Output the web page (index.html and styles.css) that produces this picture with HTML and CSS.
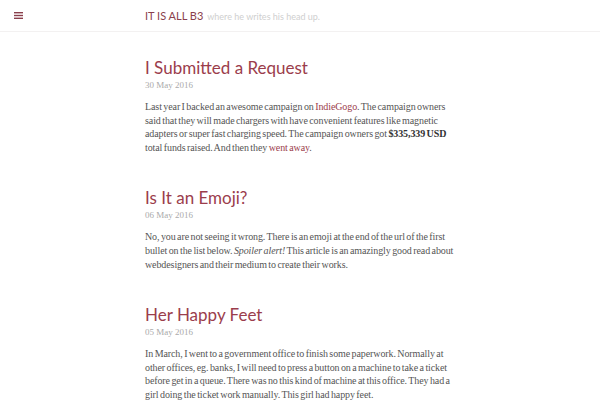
FILE: index.html
```html
<!DOCTYPE html>
<html>
<head>
<meta charset="utf-8">
<link rel="stylesheet" href="styles.css">
</head>
<body>
<header class="topbar">
  <div class="menu">
    <svg width="9" height="7" viewBox="0 0 9 7"><rect x="0" y="0" width="9" height="1.4" fill="#8a3f4c"/><rect x="0" y="2.8" width="9" height="1.4" fill="#8a3f4c"/><rect x="0" y="5.6" width="9" height="1.4" fill="#8a3f4c"/></svg>
  </div>
  <div class="brand"><span class="site">IT IS ALL B3</span><span class="tagline">where he writes his head up.</span></div>
</header>
<main class="content">
  <article class="post">
    <h2 class="title">I Submitted a Request</h2>
    <div class="date">30 May 2016</div>
    <p class="body">Last year I backed an awesome campaign on <a class="link">IndieGogo</a>. The campaign owners said that they will made chargers with have convenient features like magnetic adapters or super fast charging speed. The campaign owners got <strong>$335,339 USD</strong> total funds raised. And then they <a class="link">went away</a>.</p>
  </article>
  <article class="post">
    <h2 class="title">Is It an Emoji?</h2>
    <div class="date">06 May 2016</div>
    <p class="body">No, you are not seeing it wrong. There is an emoji at the end of the url of the first bullet on the list below. <em>Spoiler alert!</em> This article is an amazingly good read about webdesigners and their medium to create their works.</p>
  </article>
  <article class="post">
    <h2 class="title">Her Happy Feet</h2>
    <div class="date">05 May 2016</div>
    <p class="body">In March, I went to a government office to finish some paperwork. Normally at other offices, eg. banks, I will need to press a button on a machine to take a ticket before get in a queue. There was no this kind of machine at this office. They had a girl doing the ticket work manually. This girl had happy feet.</p>
  </article>
</main>
</body>
</html>
```
FILE: styles.css
```css
html, body { margin: 0; padding: 0; background: #fff; }
body { width: 600px; height: 400px; overflow: hidden; }
.topbar {
  height: 31px;
  border-bottom: 1px solid #f3f1f1;
  display: flex;
  align-items: center;
}
.menu { width: 145px; padding-left: 14px; box-sizing: border-box; display: flex; align-items: center; }
.menu svg { display: block; }
.brand { display: flex; align-items: baseline; gap: 4px; }
.site { font-family: "Lato", sans-serif; font-size: 11px; color: #8a3f4c; }
.tagline { font-family: "Lato", sans-serif; font-size: 9px; color: #cfcfcf; }
.content { padding: 25px 0 0 145px; width: 313px; }
.post { margin-bottom: 33px; }
.title {
  margin: 0;
  font-family: "Lato", sans-serif;
  font-weight: 400;
  font-size: 17px;
  line-height: 22px;
  color: #9b3d4c;
}
.date {
  font-family: "Liberation Serif", serif;
  font-size: 9px;
  line-height: 12px;
  color: #aaa;
}
.body {
  margin: 9px 0 0 0;
  font-family: "Liberation Serif", serif;
  font-size: 10px;
  word-spacing: -0.9px;
  letter-spacing: -0.1px;
  line-height: 13.6px;
  color: #555;
}
.body strong { color: #333; }
.link { color: #9b3d4c; text-decoration: none; }
```
